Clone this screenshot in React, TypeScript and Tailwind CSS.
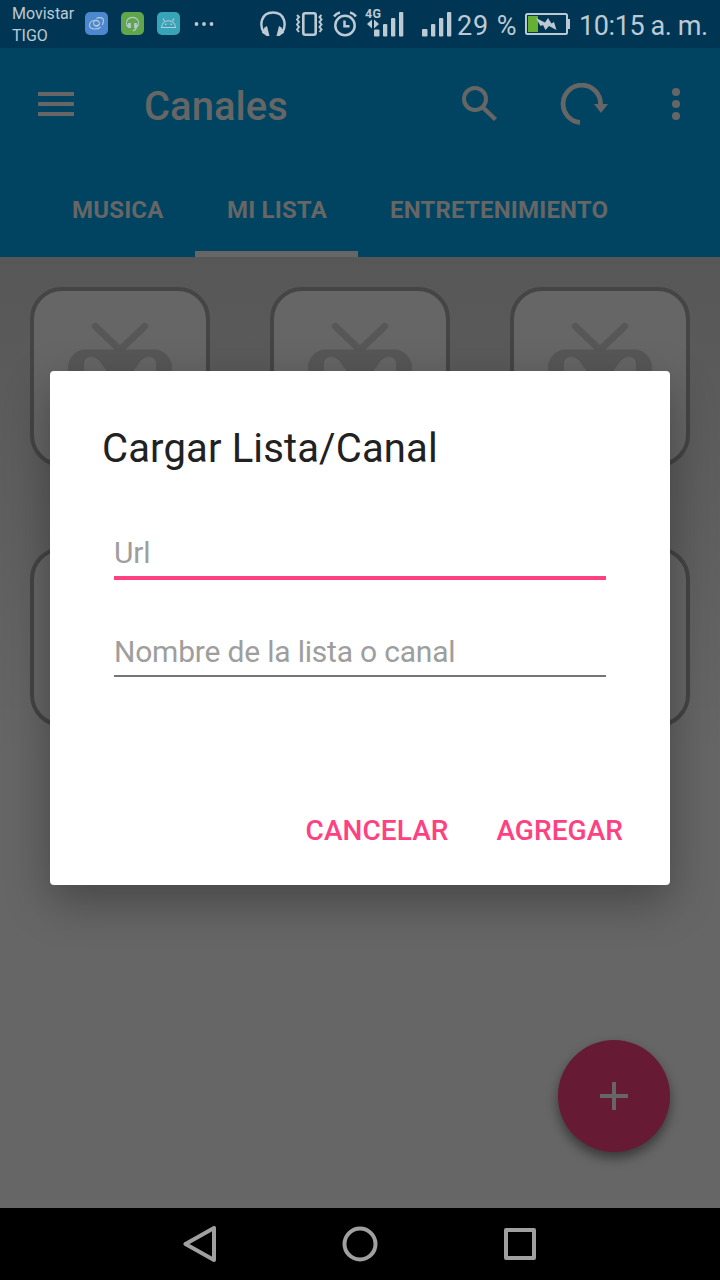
import type { ReactNode } from 'react';

const tabs = [
  { name: 'MUSICA', width: 'w-[91px]', active: false },
  { name: 'MI LISTA', width: 'w-[99px]', active: true },
  { name: 'ENTRETENIMIENTO', width: 'w-[218px]', active: false },
];

const channels = [1, 2, 3, 4, 5, 6];

function AppBadge({ color, children }: { color: string; children: ReactNode }) {
  return (
    <span className={`flex size-[23px] items-center justify-center rounded-[5px] ${color}`}>
      <svg className="size-[17px] fill-none stroke-[#b9cad6]" viewBox="0 0 17 17" strokeWidth="1.1">
        {children}
      </svg>
    </span>
  );
}

function StatusBar() {
  return (
    <div className="flex h-12 items-start bg-[#003654] text-[#bdcad3]">
      <div className="ml-3 mt-[3px] w-[73px] whitespace-nowrap text-[16px] leading-[22px]">
        <p>Movistar</p>
        <p>TIGO</p>
      </div>
      <div className="mt-[12px] flex gap-[13px]">
        <AppBadge color="bg-[#4b88cf]">
          <path d="M10.500 6.500C9 4.500 5.500 5.500 5.500 8.200S9 11.500 11 9.500" />
          <path d="M7 10.500c1.500 1.500 4.500.5 4.500-2S8.500 5 6 5.500 1.500 8 1.500 10.500 4 14 7.500 14s4-1 5-2" />
          <path d="M8.500 3.500c1.500-1.300 6.500-1.500 7 1.500.3 2-.7 3-1.200 5" />
        </AppBadge>
        <AppBadge color="bg-[#61a64b]">
          <path d="M2.500 9.500C1 0 16 0 14.500 9.500" />
          <path d="M5.500 8v5M11.500 8v5" strokeWidth="2.600" />
          <path d="M2.500 9.500 4.500 12M14.500 9.500 12.500 12c-1 3.500-2 3.500-3.500 3.500" strokeWidth="1.300" />
        </AppBadge>
        <AppBadge color="bg-[#37a5b7]">
          <path d="M1.500 12.500C2 3.500 15 3.500 15.500 12.500zM4.500 6 3 3.500M12.500 6 14 3.500" />
          <path d="M5 9.300h1.500M10.500 9.300H12" strokeWidth="1.500" />
        </AppBadge>
      </div>
      <svg className="ml-[14px] mt-[22px] h-1 w-5" viewBox="0 0 20 4" fill="currentColor">
        <circle cx="2.500" cy="2" r="1.900" />
        <circle cx="10" cy="2" r="1.900" />
        <circle cx="17.500" cy="2" r="1.900" />
      </svg>
      {/* headphones */}
      <svg className="ml-[46px] mt-[11px] h-[26px] w-[26px]" viewBox="0 0 26 26" fill="none" stroke="currentColor">
        <path d="M4 22C-1 14 1 1.500 13 1.500S27 14 22 22" strokeWidth="2.400" />
        <path d="M4.500 16.500 7 15l2.500 10H6.500L2 21.500zM21.500 16.500 19 15l-2.500 10h3L24 21.500z" fill="currentColor" stroke="none" />
      </svg>
      {/* vibrate */}
      <svg className="ml-[10px] mt-[12px] h-6 w-[27px]" viewBox="0 0 27 24" fill="none" stroke="currentColor">
        <rect x="7.300" y="1.300" width="12.400" height="21.400" rx="2" strokeWidth="2.600" />
        <path d="m1 3 2 2-2 2.500 2 2.500-2 2.500L3 15l-2 2.500 2 2.500M25.500 3l-2 2 2 2.500-2 2.500 2 2.500-2 2.500 2 2.500-2 2.500" strokeWidth="2" />
      </svg>
      {/* alarm */}
      <svg className="ml-[10px] mt-[11px] h-[26px] w-6" viewBox="0 0 24 26" fill="none" stroke="currentColor">
        <circle cx="12" cy="14.500" r="9.700" strokeWidth="2.500" />
        <path d="M1 5.500Q3 2.500 7 1.500M23 5.500Q21 2.500 17 1.500" strokeWidth="2.500" />
        <path d="M11.500 9.500v5.700h5" strokeWidth="2.500" />
      </svg>
      <div className="ml-[8px] mt-[7px] flex h-[31px] w-[40px] flex-col">
        <span className="h-[12px] text-[12.500px] font-bold leading-[13px] tracking-[0.4px]">4G</span>
        <svg className="-mt-[8px] h-[26px] w-[40px] shrink-0" viewBox="0 0 40 26" fill="currentColor">
          <path d="m2 13 5-4.500v9zM14 13 9 8.500v9z" />
          <rect x="9" y="18.500" width="5.500" height="7" rx="1" />
          <rect x="18" y="13" width="4.300" height="12.500" rx="1" />
          <rect x="26" y="7" width="4.300" height="18.500" rx="1" />
          <rect x="34" y="1" width="4.300" height="24.500" rx="1" />
        </svg>
      </div>
      <svg className="ml-[17px] mt-[11px] h-[26px] w-[30px]" viewBox="0 0 30 26" fill="currentColor">
        <rect x="0" y="18" width="5.500" height="7.500" rx="1" />
        <rect x="9" y="13" width="4.300" height="12.500" rx="1" />
        <rect x="17" y="7" width="4.300" height="18.500" rx="1" />
        <rect x="25" y="1" width="4.300" height="24.500" rx="1" />
      </svg>
      <span className="ml-[5px] mt-[10px] w-[68px] whitespace-nowrap text-[27px] leading-8 tracking-[0.9px]">29 %</span>
      <svg className="mt-[13px] h-[22px] w-[46px]" viewBox="0 0 46 22">
        <rect x="1" y="1" width="41" height="20" rx="1.500" fill="none" stroke="currentColor" strokeWidth="2" />
        <rect x="3" y="3" width="10" height="16" fill="#66af35" />
        <path d="M43 6h2v10h-2z" fill="currentColor" />
        <path d="m11 5 9 4.500 3-4.500 3.500 5.500 2.500-1.500L31.500 17l-7.500-4-3.500 4-2.500-5-2.500 1z" fill="currentColor" />
      </svg>
      <span className="ml-[8px] mt-[10px] whitespace-nowrap text-[27px] leading-8 tracking-[-0.4px]">10:15 a. m.</span>
    </div>
  );
}

function Header() {
  return (
    <header className="flex h-[209px] flex-col justify-between bg-[#004461] text-[#666]">
      <div className="flex h-28 items-center">
        <svg className="ml-[38px] h-6 w-9" viewBox="0 0 36 24" fill="currentColor">
          <path d="M0 0h36v4H0zM0 10h36v4H0zM0 20h36v4H0z" />
        </svg>
        <h1 className="ml-[70px] w-[318px] pt-1.5 text-[40px] font-medium leading-[48px]">Canales</h1>
        <svg className="h-9 w-9" viewBox="0 0 36 36" fill="none" stroke="currentColor">
          <circle cx="13" cy="13" r="11" strokeWidth="4" />
          <path d="m21.500 22 12 11.500" strokeWidth="4.500" />
        </svg>
        <svg className="ml-[62px] h-[42px] w-12" viewBox="0 0 48 42" fill="none" stroke="currentColor">
          <path d="M20 39.500A18.700 18.700 0 1 1 40.500 21" strokeWidth="4.800" />
          <path d="M34 21h14L41 30z" fill="currentColor" stroke="none" />
        </svg>
        <svg className="ml-[64px] h-8 w-2" viewBox="0 0 8 32" fill="currentColor">
          <circle cx="4" cy="4" r="4" />
          <circle cx="4" cy="16" r="4" />
          <circle cx="4" cy="28" r="4" />
        </svg>
      </div>
      <nav className="ml-10 flex h-24">
        {tabs.map((tab) => (
          <div key={tab.name} className={`flex flex-col justify-end ${tab.active ? 'border-b-[6px] border-[#666]' : 'pb-[6px]'}`}>
            <span className={`mx-8 mb-[26px] whitespace-nowrap text-[24px] font-bold leading-[30px] tracking-[0.18px] ${tab.width}`}>{tab.name}</span>
          </div>
        ))}
      </nav>
    </header>
  );
}

function ChannelCard() {
  return (
    <div className="flex h-[180px] justify-center rounded-[32px] border-4 border-[#454545] bg-[#666]">
      <svg className="mt-[30px] h-[110px] w-[104px]" viewBox="0 0 104 110">
        <path d="m27.500 5.500 24.500 23.500L76.500 5.500" fill="none" stroke="#575757" strokeWidth="7" strokeLinecap="round" />
        <rect y="28.500" width="104" height="76" rx="18" fill="#575757" />
        <path d="M16 90V43q0-7 7-7 6 0 10 6l19 27 19-27q4-6 10-6 7 0 7 7v47" fill="#666" />
      </svg>
    </div>
  );
}

function LoadDialog() {
  return (
    <div
      role="dialog"
      className="absolute left-[50px] top-[371px] flex h-[514px] w-[620px] flex-col rounded-[4px] bg-white shadow-[0_16px_46px_rgba(0,0,0,0.32)]"
    >
      <h2 className="ml-[52px] mt-[54px] text-[40px] leading-[48px] tracking-[0.14px] text-[#212121]">Cargar Lista/Canal</h2>
      <div className="mx-16 mt-[52px] flex h-[55px] flex-col justify-end border-b-4 border-[#ff4081]">
        <span className="mb-[5px] text-[30px] leading-9 tracking-[-0.2px] text-[#9e9e9e]">Url</span>
      </div>
      <div className="mx-16 mt-11 flex h-[53px] flex-col justify-end border-b-2 border-[#757575]">
        <span className="mb-[5px] text-[30px] leading-9 tracking-[-0.2px] text-[#9e9e9e]">Nombre de la lista o canal</span>
      </div>
      <div className="mb-[37px] mr-[47px] mt-auto flex justify-end gap-12 text-[28px] font-medium leading-[34px] tracking-[0.06px] text-[#ff4081]">
        <button>CANCELAR</button>
        <button>AGREGAR</button>
      </div>
    </div>
  );
}

function NavBar() {
  return (
    <div className="flex h-[72px] items-center justify-center gap-[124px] bg-black">
      <svg className="size-9" viewBox="0 0 36 36" fill="none" stroke="#a0a0a0" strokeWidth="4" strokeLinejoin="round">
        <path d="M3.500 18 32 2v32z" />
      </svg>
      <svg className="size-9" viewBox="0 0 36 36" fill="none" stroke="#a0a0a0" strokeWidth="4">
        <circle cx="18" cy="18" r="15.500" />
      </svg>
      <svg className="size-9" viewBox="0 0 36 36" fill="none" stroke="#a0a0a0" strokeWidth="4" strokeLinejoin="round">
        <path d="M4 4h28v28H4z" />
      </svg>
    </div>
  );
}

export default function App() {
  return (
    <div className="relative flex h-[1280px] w-[720px] flex-col overflow-hidden font-[Roboto,sans-serif]">
      <StatusBar />
      <Header />
      <main className="relative flex-1 bg-[linear-gradient(#575757,#666_500px)] px-[30px] pt-[30px]">
        <div className="grid grid-cols-3 gap-x-[60px] gap-y-20">
          {channels.map((id) => (
            <ChannelCard key={id} />
          ))}
        </div>
        <button className="absolute bottom-14 right-[50px] flex size-28 items-center justify-center rounded-full bg-[#661a33] shadow-[0_6px_12px_rgba(0,0,0,0.45)]">
          <svg className="size-7" viewBox="0 0 28 28" fill="#666">
            <path d="M12 0h4v12h12v4H16v12h-4V16H0v-4h12z" />
          </svg>
        </button>
      </main>
      <NavBar />
      <LoadDialog />
    </div>
  );
}
